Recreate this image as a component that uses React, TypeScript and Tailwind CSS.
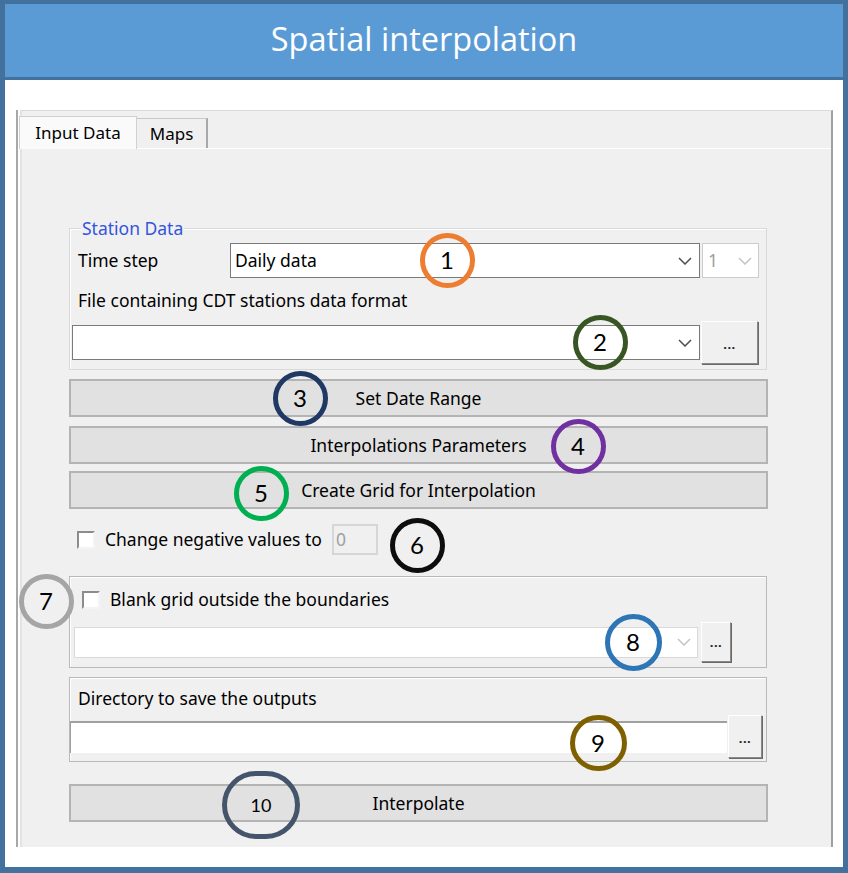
import React from "react";

function Chevron({ color = "#4d4d4d" }: { color?: string }) {
  return (
    <svg width="14" height="8" viewBox="0 0 14 8" className="shrink-0">
      <polyline points="1,1 7,7 13,1" fill="none" stroke={color} strokeWidth="1.5" />
    </svg>
  );
}

function DotsButton({ className }: { className: string }) {
  return (
    <div
      className={`flex items-end justify-center bg-[#f0f0f0] border border-t-white border-l-white border-r-[#8a8a8a] border-b-[#8a8a8a] shadow-[1px_1px_0_#696969] ${className}`}
    >
      <span className="text-[13px] font-bold leading-none tracking-[0.5px] text-[#222] pb-[12px]">...</span>
    </div>
  );
}

function WideButton({ label, className = "" }: { label: string; className?: string }) {
  return (
    <div className={`h-[38px] bg-[#e1e1e1] border-2 border-[#b4b4b4] flex items-center justify-center text-black ${className}`}>
      {label}
    </div>
  );
}

function Checkbox() {
  return (
    <div className="w-[18px] h-[18px] bg-white border-2 border-t-[#8c8c8c] border-l-[#8c8c8c] border-r-[#f4f4f4] border-b-[#f4f4f4] shrink-0" />
  );
}

// Numbered annotation rings laid over the dialog.
const MARKS = [
  { n: "1", x: 447, y: 260, w: 55, h: 55, c: "border-[#ed7d31]", t: "text-[24px]" },
  { n: "2", x: 600, y: 342, w: 55, h: 55, c: "border-[#375623]", t: "text-[24px]" },
  { n: "3", x: 300, y: 398, w: 55, h: 55, c: "border-[#203864]", t: "text-[24px]" },
  { n: "4", x: 578, y: 446, w: 55, h: 55, c: "border-[#7030a0]", t: "text-[24px]" },
  { n: "5", x: 261, y: 493, w: 55, h: 55, c: "border-[#00b050]", t: "text-[24px]" },
  { n: "6", x: 417, y: 545, w: 55, h: 55, c: "border-[#0d0d0d]", t: "text-[24px]" },
  { n: "7", x: 46, y: 601, w: 55, h: 55, c: "border-[#a5a5a5]", t: "text-[24px]" },
  { n: "8", x: 633, y: 642, w: 57, h: 57, c: "border-[#2e75b6]", t: "text-[24px]" },
  { n: "9", x: 598, y: 743, w: 57, h: 56, c: "border-[#7f6000]", t: "text-[24px]" },
  { n: "10", x: 261, y: 805, w: 78, h: 68, c: "border-[#44546a]", t: "text-[18px]" },
];

export default function App() {
  return (
    <div className="relative w-[848px] h-[873px] bg-[#41719c] pt-[4px] pl-[5px] pr-[5px] pb-[6px] flex flex-col font-['Noto_Sans',sans-serif]">
      {/* Title bar */}
      <div className="h-[73px] bg-[#5b9bd5] flex items-center justify-center">
        <span className="text-white text-[32.5px] font-['Open_Sans',sans-serif] leading-none pb-[3px]">Spatial interpolation</span>
      </div>

      <div className="mt-[3px] flex-1 bg-white pt-[30px] pl-[11px] pr-[10px] pb-[20px] flex flex-col">
        {/* Notebook */}
        <div className="flex-1 flex flex-col border-l-2 border-[#a8a8a8] bg-white pl-[2px]">
          <div className="flex-1 flex flex-col bg-[#f0f0f0] border-l-2 border-l-[#e3e3e3] border-t border-t-[#d9d9d9] border-r-2 border-r-[#a0a0a0]">
            {/* Tabs */}
            <div className="h-[37px] flex items-end -ml-[3px] text-[17px] text-black">
              <div className="h-[33px] w-[118px] bg-[#fafafa] border border-b-0 border-[#d0d0d0] flex items-center justify-center -mb-[1px] relative z-10">
                Input Data
              </div>
              <div className="h-[30px] w-[71px] bg-[#f0f0f0] border border-b-0 border-l-0 border-[#c8c8c8] border-r-2 border-r-[#a8a8a8] flex items-center justify-center">
                Maps
              </div>
            </div>

            {/* Pane */}
            <div className="flex-1 border-t border-t-white flex flex-col pl-[47px] text-[17.5px] text-black">
              <div className="w-[698px] flex flex-col">
                {/* Station Data */}
                <div className="relative mt-[79px] border border-[#d9d9d9] shadow-[inset_1px_1px_0_#fff] pt-[14px] pb-[5px]">
                  <span className="absolute left-[11px] -top-[13px] bg-[#f0f0f0] px-[1px] text-[#3355dd] leading-[24px]">Station Data</span>
                  <div className="flex items-center h-[35px]">
                    <span className="w-[160px] pl-[8px]">Time step</span>
                    <div className="w-[470px] h-[35px] bg-white border border-[#7a7a7a] flex items-center justify-between pl-[4px] pr-[7px]">
                      <span>Daily data</span>
                      <Chevron />
                    </div>
                    <div className="ml-[2px] w-[57px] h-[35px] bg-white border border-[#cccccc] flex items-center justify-between pl-[5px] pr-[6px]">
                      <span className="text-[#a0a0a0]">1</span>
                      <Chevron color="#c4c4c4" />
                    </div>
                  </div>
                  <div className="mt-[10px] pl-[8px] leading-[24px]">File containing CDT stations data format</div>
                  <div className="mt-[9px] flex items-center h-[43px] pl-[2px]">
                    <div className="w-[628px] h-[35px] bg-white border border-[#7a7a7a] flex items-center justify-end pr-[7px]">
                      <Chevron />
                    </div>
                    <DotsButton className="ml-[1px] w-[57px] h-[43px]" />
                  </div>
                </div>

                <WideButton label="Set Date Range" className="mt-[9px] -mr-[1px]" />
                <WideButton label="Interpolations Parameters" className="mt-[9px] -mr-[1px]" />
                <WideButton label="Create Grid for Interpolation" className="mt-[7px] -mr-[1px]" />

                {/* Negative values */}
                <div className="mt-[15px] h-[31px] flex items-center pl-[8px]">
                  <Checkbox />
                  <span className="ml-[10px] w-[227px]">Change negative values to</span>
                  <div className="w-[46px] h-[31px] border-2 border-[#d6d6d6] bg-[#f0f0f0] flex items-center pl-[2px] text-[#a0a0a0]">0</div>
                </div>

                {/* Boundaries */}
                <div className="mt-[21px] border border-[#b9b9b9] shadow-[inset_1px_1px_0_#fff] pt-[13px] pb-[5px]">
                  <div className="flex items-center h-[19px] pl-[12px]">
                    <Checkbox />
                    <span className="ml-[10px]">Blank grid outside the boundaries</span>
                  </div>
                  <div className="mt-[13px] flex items-center h-[40px] pl-[4px]">
                    <div className="w-[624px] h-[31px] bg-white border border-[#d9d9d9] flex items-center justify-end pr-[6px]">
                      <Chevron color="#c4c4c4" />
                    </div>
                    <DotsButton className="ml-[3px] w-[30px] h-[40px]" />
                  </div>
                </div>

                {/* Output directory */}
                <div className="mt-[9px] border border-[#b9b9b9] shadow-[inset_1px_1px_0_#fff] pt-[8px] pb-[3px]">
                  <div className="pl-[8px] leading-[24px]">Directory to save the outputs</div>
                  <div className="mt-[5px] flex items-center h-[43px]">
                    <div className="w-[657px] h-[32px] bg-white border-t-2 border-t-[#a0a0a0] border-l border-l-[#a0a0a0]" />
                    <DotsButton className="ml-[1px] w-[34px] h-[43px]" />
                  </div>
                </div>

                <WideButton label="Interpolate" className="mt-[22px] -mr-[1px]" />
              </div>
            </div>
          </div>
        </div>
      </div>

      {MARKS.map(m => (
        <div
          key={m.n}
          className={`absolute rounded-full border-[5px] ${m.c} flex items-center justify-center font-['Lato',sans-serif] text-black ${m.t}`}
          style={{ left: m.x - m.w / 2, top: m.y - m.h / 2, width: m.w, height: m.h }}
        >
          {m.n}
        </div>
      ))}
    </div>
  );
}
